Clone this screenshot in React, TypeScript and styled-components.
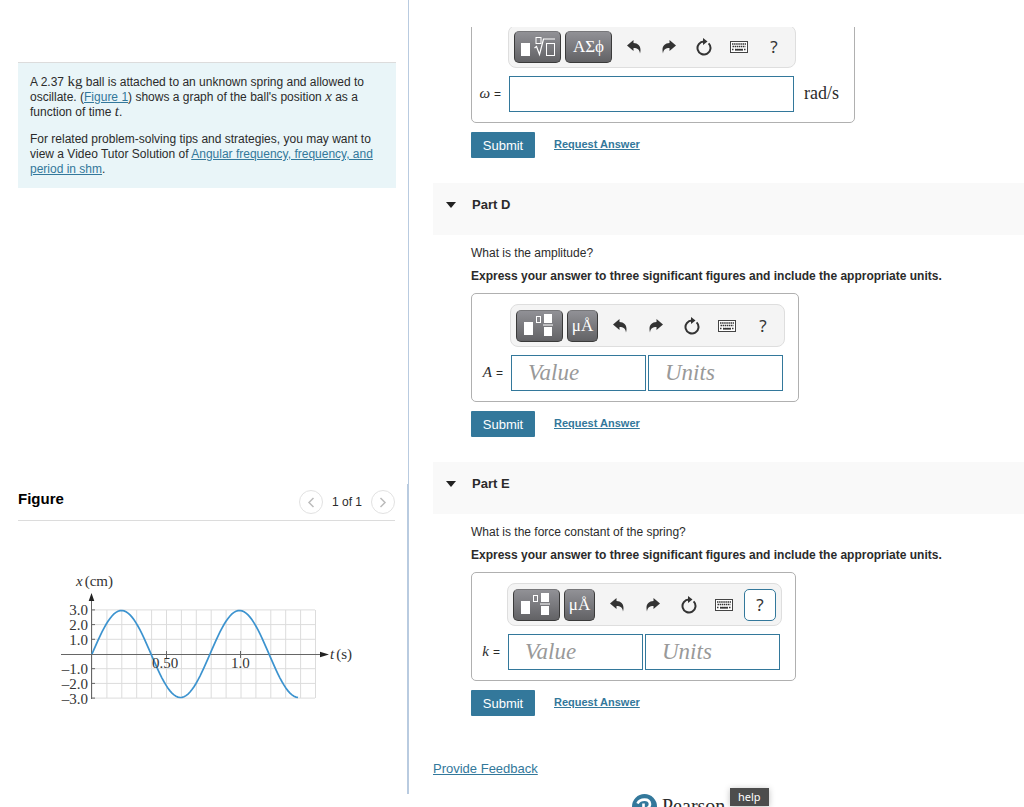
import React from "react";
import styled, { createGlobalStyle } from "styled-components";

const sans = '"Liberation Sans", Arial, sans-serif';
const serif = '"Liberation Serif", "Times New Roman", serif';
const teal = "#33789b";

const GlobalStyle = createGlobalStyle`
  * { box-sizing: border-box; }
  body { margin: 0; background: #fff; color: #2b2b2b; font: 12px/15px ${sans}; }
  button, input { font-family: inherit; margin: 0; }
  p, h2, h3 { margin: 0; }
`;

const Page = styled.div`
  display: grid;
  grid-template-columns: 409px minmax(0, 1fr);
  height: 100vh;
  overflow: hidden;
`;

const Sidebar = styled.aside`
  display: flex;
  flex-direction: column;
  padding-bottom: 13px;
`;

const ProblemPane = styled.section`
  height: 60vh;
  padding: 62px 12px 0 18px;
  border-right: 1px solid #b9cbe0;
`;

const ProblemCard = styled.div`
  display: flex;
  flex-direction: column;
  gap: 12px;
  padding: 12px 12px 11px;
  border-top: 1px solid #dcdcdc;
  background: #e9f5f8;
  font-size: 12px;
  line-height: 15px;
`;

const Link = styled.a`
  color: ${teal};
  text-decoration: underline;
`;

const MathText = styled.span<{ $italic?: boolean }>`
  font-family: ${serif};
  font-size: 15px;
  line-height: 12px;
  font-style: ${(p) => (p.$italic ? "italic" : "normal")};
`;

const FigurePane = styled.section`
  flex: 1;
  padding: 0 12px 0 18px;
  border-right: 2px solid #b9cbe0;
`;

const FigureHeader = styled.header`
  display: flex;
  align-items: center;
  justify-content: space-between;
  height: 37px;
  border-bottom: 1px solid #dcdcdc;
`;

const FigureTitle = styled.h2`
  color: #000;
  font-size: 15px;
  line-height: 18px;
  padding-bottom: 6px;
`;

const Pager = styled.div`
  display: flex;
  align-items: center;
  gap: 9px;
  font-size: 12px;
`;

const PagerButton = styled.button`
  display: grid;
  place-items: center;
  width: 24px;
  height: 24px;
  padding: 0;
  border: 1px solid #e2e2e2;
  border-radius: 50%;
  background: #fff;
`;

const Graph = styled.svg`
  display: block;
  margin: 44px 0 0 22px;
  font-family: ${serif};
  font-size: 15px;
  fill: #333;
`;

const Main = styled.main`
  padding: 27px 0 0 24px;
  overflow: hidden;
`;

const Scroller = styled.div`
  overflow: hidden;
  height: 100%;
`;

const Part = styled.section<{ $scrolled?: boolean }>`
  margin-top: ${(p) => (p.$scrolled ? "-13px" : "25px")};
`;

const PartHeader = styled.header`
  display: flex;
  align-items: flex-start;
  gap: 16px;
  height: 52px;
  padding: 14px 13px;
  background: #f9f9f9;
`;

const CollapseButton = styled.button`
  display: grid;
  place-items: center;
  width: 10px;
  height: 15px;
  padding: 0;
  border: 0;
  background: none;
`;

const PartTitle = styled.h3`
  font-size: 13px;
  line-height: 16px;
`;

const PartBody = styled.div`
  padding-left: 38px;
`;

const Question = styled.p`
  padding-top: 10px;
  line-height: 16px;
`;

const Instruction = styled.p`
  padding: 8px 0 9px;
  line-height: 15px;
  font-weight: bold;
`;

const AnswerBox = styled.div<{ $labelWidth: number }>`
  display: inline-grid;
  grid-template-columns: ${(p) => p.$labelWidth}px auto auto;
  row-gap: 8px;
  padding: 10px 15px 10px 0;
  border: 1px solid #b0b0b0;
  border-radius: 5px;
  vertical-align: top;
`;

const Toolbar = styled.div`
  grid-column: 2;
  display: flex;
  align-items: center;
  height: 43px;
  margin: 0 -2px 0 -1px;
  padding: 0 5px;
  border: 1px solid #dedede;
  border-radius: 8px;
  background: #f4f4f4;
`;

const PaletteButton = styled.button<{ $narrow?: boolean }>`
  display: grid;
  place-items: center;
  width: ${(p) => (p.$narrow ? 31 : 47)}px;
  height: 32px;
  margin-right: 4px;
  padding: 0;
  border: 1px solid #3a3a3a;
  border-top-color: #77777a;
  border-radius: 5px;
  background: linear-gradient(#919196, #626265);
  color: #fff;
  font: 17px/28px ${serif};
`;

const ToolGroup = styled.div`
  display: flex;
  flex: 1;
  justify-content: space-between;
  margin-left: 2px;
`;

const ToolButton = styled.button<{ $active?: boolean }>`
  display: grid;
  place-items: center;
  width: 32px;
  height: 32px;
  padding: 0;
  border: 1px solid ${(p) => (p.$active ? teal : "transparent")};
  border-radius: 5px;
  background: ${(p) => (p.$active ? "#fff" : "none")};
  color: #333;
  font: 17px/28px "Noto Sans", sans-serif;
`;

const FieldLabel = styled.label`
  grid-column: 1;
  display: flex;
  align-items: baseline;
  justify-content: flex-end;
  gap: 4px;
  align-self: center;
  padding-right: 8px;
`;

const Fields = styled.div`
  grid-column: 2;
  display: flex;
  gap: 2px;
`;

const Field = styled.input<{ $wide?: boolean }>`
  width: ${(p) => (p.$wide ? 285 : 135)}px;
  height: 36px;
  padding: 0 16px;
  border: 1px solid ${teal};
  border-radius: 0;
  background: #fff;
  font: 23px/30px ${serif};
  &::placeholder {
    color: #999;
    font-style: italic;
    opacity: 1;
  }
`;

const Unit = styled.span`
  align-self: center;
  padding: 0 0 3px 10px;
  font: 18px/20px ${serif};
`;

const Actions = styled.div`
  display: flex;
  align-items: center;
  gap: 19px;
  padding-top: 9px;
`;

const SubmitButton = styled.button`
  width: 64px;
  height: 26px;
  padding: 0;
  border: 0;
  border-radius: 1px;
  background: ${teal};
  color: #fff;
  font-size: 13px;
`;

const RequestLink = styled(Link)`
  padding-bottom: 2px;
  font-size: 11px;
  font-weight: bold;
`;

const Feedback = styled.div`
  padding-top: 45px;
  font-size: 13px;
`;

const Footer = styled.footer`
  position: relative;
  display: flex;
  align-items: flex-start;
  gap: 5px;
  padding: 18px 0 0 199px;
`;

const BrandName = styled.span`
  font: 20px/24px ${serif};
`;

const Tooltip = styled.span`
  position: absolute;
  top: 12px;
  left: 297px;
  padding: 1px 8px 2px;
  background: #4d4d4d;
  box-shadow: 0 1px 6px rgba(0, 0, 0, 0.25);
  color: #fff;
  font: 11px/15px "Noto Sans", sans-serif;
`;

const CurvedArrow = ({ flip = false }: { flip?: boolean }) => (
  <svg width="14" height="14" viewBox="0 0 14 14" aria-hidden="true">
    <path
      transform={flip ? "matrix(-1 0 0 1 14 0)" : undefined}
      fill="#333"
      d="M0 5.500 6.500 0v3c5.500.3 8.200 4 6.500 10.500C12.500 9.500 10.500 8 6.500 8v3z"
    />
  </svg>
);

const ResetIcon = () => (
  <svg width="16" height="18" viewBox="0 0 16 18" aria-hidden="true">
    <path d="M12.600 5.400A6.500 6.500 0 1 1 8 3.500" fill="none" stroke="#333" strokeWidth="2" />
    <path d="M7 0 11.500 3.500 7 7z" fill="#333" />
  </svg>
);

const KeyboardIcon = () => (
  <svg width="18" height="12" viewBox="0 0 18 12" aria-hidden="true">
    <rect x=".5" y=".5" width="17" height="11" fill="#fff" stroke="#444" />
    <path
      d="M2 3h14M2.500 5.500h13M2 8.500h2M5 8.500h8M14 8.500h2"
      stroke="#333"
      strokeWidth="1.500"
      strokeDasharray="1.500 .6"
    />
    <path d="M5 8.800h8" stroke="#333" strokeWidth="1.500" />
  </svg>
);

const RootIcon = () => (
  <svg width="36" height="22" viewBox="0 0 36 22" aria-hidden="true">
    <rect x="1" y="7" width="9" height="13" fill="#fff" />
    <rect x="16" y="1.500" width="5" height="6" fill="none" stroke="#fff" />
    <path d="M14.500 12l2-1.500 3 8L23.500 3H35" fill="none" stroke="#fff" strokeWidth="1.200" />
    <rect x="26.500" y="7.500" width="8" height="12" fill="none" stroke="#fff" />
  </svg>
);

const FractionIcon = () => (
  <svg width="32" height="25" viewBox="0 0 32 25" aria-hidden="true">
    <rect x="0" y="9" width="9" height="13" fill="#fff" />
    <rect x="12.500" y="3.500" width="4" height="6" fill="none" stroke="#fff" />
    <rect x="20" y="1" width="8" height="9" fill="#fff" />
    <path d="M19 12h10" stroke="#fff" />
    <rect x="20" y="14" width="8" height="9" fill="#fff" />
  </svg>
);

const Chevron = ({ d }: { d: string }) => (
  <svg width="8" height="11" viewBox="0 0 8 11" aria-hidden="true">
    <path d={d} fill="none" stroke="#bbb" strokeWidth="1.500" />
  </svg>
);

const Tools = ({ roots = false, helpActive = false }: { roots?: boolean; helpActive?: boolean }) => (
  <Toolbar role="toolbar">
    <PaletteButton aria-label="Templates">{roots ? <RootIcon /> : <FractionIcon />}</PaletteButton>
    <PaletteButton $narrow={!roots}>{roots ? "ΑΣϕ" : "μÅ"}</PaletteButton>
    <ToolGroup>
      <ToolButton aria-label="Undo"><CurvedArrow /></ToolButton>
      <ToolButton aria-label="Redo"><CurvedArrow flip /></ToolButton>
      <ToolButton aria-label="Reset"><ResetIcon /></ToolButton>
      <ToolButton aria-label="Keyboard shortcuts"><KeyboardIcon /></ToolButton>
      <ToolButton $active={helpActive}>?</ToolButton>
    </ToolGroup>
  </Toolbar>
);

const SubmitRow = () => (
  <Actions>
    <SubmitButton>Submit</SubmitButton>
    <RequestLink href="#request">Request Answer</RequestLink>
  </Actions>
);

type QuantityPartProps = {
  title: string;
  question: string;
  symbol: string;
  labelWidth: number;
  helpActive?: boolean;
};

const QuantityPart = ({ title, question, symbol, labelWidth, helpActive }: QuantityPartProps) => (
  <Part>
    <PartHeader>
      <CollapseButton aria-label={`Collapse ${title}`}>
        <svg width="10" height="6" viewBox="0 0 10 6"><path d="M0 0h10L5 6z" fill="#222" /></svg>
      </CollapseButton>
      <PartTitle>{title}</PartTitle>
    </PartHeader>
    <PartBody>
      <Question>{question}</Question>
      <Instruction>
        Express your answer to three significant figures and include the appropriate units.
      </Instruction>
      <AnswerBox $labelWidth={labelWidth}>
        <Tools helpActive={helpActive} />
        <FieldLabel htmlFor={`value-${symbol}`}>
          <MathText $italic>{symbol}</MathText> =
        </FieldLabel>
        <Fields>
          <Field id={`value-${symbol}`} placeholder="Value" />
          <Field aria-label="Units" placeholder="Units" />
        </Fields>
      </AnswerBox>
      <SubmitRow />
    </PartBody>
  </Part>
);

const originX = 92;
const originY = 654;
const cellX = 14.9;
const cellY = 14.7;
const wave = Array.from({ length: 104 }, (_, i) => {
  const x = i * 2;
  return `${originX + x},${originY - 43.5 * Math.sin((2 * Math.PI * x) / 118)}`;
}).join(" ");

const PositionGraph = () => (
  <Graph width="330" height="150" viewBox="40 565 330 150" role="img" aria-label="Position against time">
    <g stroke="#dcdcdc" strokeWidth="1">
      {Array.from({ length: 16 }, (_, i) => (
        <line key={`c${i}`} x1={originX + i * cellX} x2={originX + i * cellX} y1="610" y2="698" />
      ))}
      {[-3, -2, -1, 1, 2, 3].map((n) => (
        <line key={`r${n}`} x1="92" x2="315" y1={originY + n * cellY} y2={originY + n * cellY} />
      ))}
    </g>
    <g stroke="#666" strokeWidth="1">
      <line x1="61" x2="322" y1="654.500" y2="654.500" />
      <line x1="91.500" x2="91.500" y1="600" y2="699" />
      {[-3, -2, -1, 1, 2, 3].map((n) => (
        <line key={n} x1="91" x2="95" y1={originY + n * cellY} y2={originY + n * cellY} />
      ))}
      <line x1="166.500" x2="166.500" y1="651" y2="658" />
      <line x1="240.500" x2="240.500" y1="651" y2="658" />
    </g>
    <path d="M91.500 593l2.800 8h-5.600zM329 654.500l-9 2.800v-5.600z" fill="#222" />
    <polyline points={wave} fill="none" stroke="#3c93cf" strokeWidth="1.700" />
    <text x="76" y="586"><tspan fontStyle="italic">x</tspan><tspan dx="2">(cm)</tspan></text>
    <text x="330" y="659"><tspan fontStyle="italic">t</tspan><tspan dx="2">(s)</tspan></text>
    <g textAnchor="end">
      <text x="88" y="615">3.0</text>
      <text x="88" y="630">2.0</text>
      <text x="88" y="645">1.0</text>
      <text x="88" y="674">–1.0</text>
      <text x="88" y="689">–2.0</text>
      <text x="88" y="704">–3.0</text>
    </g>
    <text x="152" y="668">0.50</text>
    <text x="231" y="668">1.0</text>
  </Graph>
);

export default function App() {
  return (
    <>
      <GlobalStyle />
      <Page>
        <Sidebar>
          <ProblemPane>
            <ProblemCard>
              <p>
                A 2.37 <MathText>kg</MathText> ball is attached to an unknown spring and allowed to
                oscillate. (<Link href="#figure">Figure 1</Link>) shows a graph of the ball's position{" "}
                <MathText $italic>x</MathText> as a function of time <MathText $italic>t</MathText>.
              </p>
              <p>
                For related problem-solving tips and strategies, you may want to view a Video Tutor
                Solution of <Link href="#tutor">Angular frequency, frequency, and period in shm</Link>.
              </p>
            </ProblemCard>
          </ProblemPane>
          <FigurePane id="figure">
            <FigureHeader>
              <FigureTitle>Figure</FigureTitle>
              <Pager>
                <PagerButton aria-label="Previous figure"><Chevron d="M6.500 1 2 5.500 6.500 10" /></PagerButton>
                <span>1 of 1</span>
                <PagerButton aria-label="Next figure"><Chevron d="M1.500 1 6 5.500 1.500 10" /></PagerButton>
              </Pager>
            </FigureHeader>
            <PositionGraph />
          </FigurePane>
        </Sidebar>
        <Main>
          <Scroller>
            <Part $scrolled>
              <PartBody>
                <AnswerBox $labelWidth={37}>
                  <Tools roots />
                  <FieldLabel htmlFor="omega"><MathText $italic>ω</MathText> =</FieldLabel>
                  <Fields><Field id="omega" $wide /></Fields>
                  <Unit>rad/s</Unit>
                </AnswerBox>
                <SubmitRow />
              </PartBody>
            </Part>
            <QuantityPart title="Part D" question="What is the amplitude?" symbol="A" labelWidth={39} />
            <QuantityPart
              title="Part E"
              question="What is the force constant of the spring?"
              symbol="k"
              labelWidth={36}
              helpActive
            />
            <Feedback><Link href="#feedback">Provide Feedback</Link></Feedback>
            <Footer>
              <svg width="25" height="25" viewBox="0 0 25 25" aria-hidden="true">
                <circle cx="12.500" cy="12.500" r="12.500" fill={teal} />
                <path d="M5.500 9.500C8 4.500 17.500 4 18 10c0 3-2.500 4.500-5 4.500M11.500 9.500V20" fill="none" stroke="#fff" strokeWidth="2.600" />
              </svg>
              <BrandName>Pearson</BrandName>
              <Tooltip role="tooltip">help</Tooltip>
            </Footer>
          </Scroller>
        </Main>
      </Page>
    </>
  );
}
